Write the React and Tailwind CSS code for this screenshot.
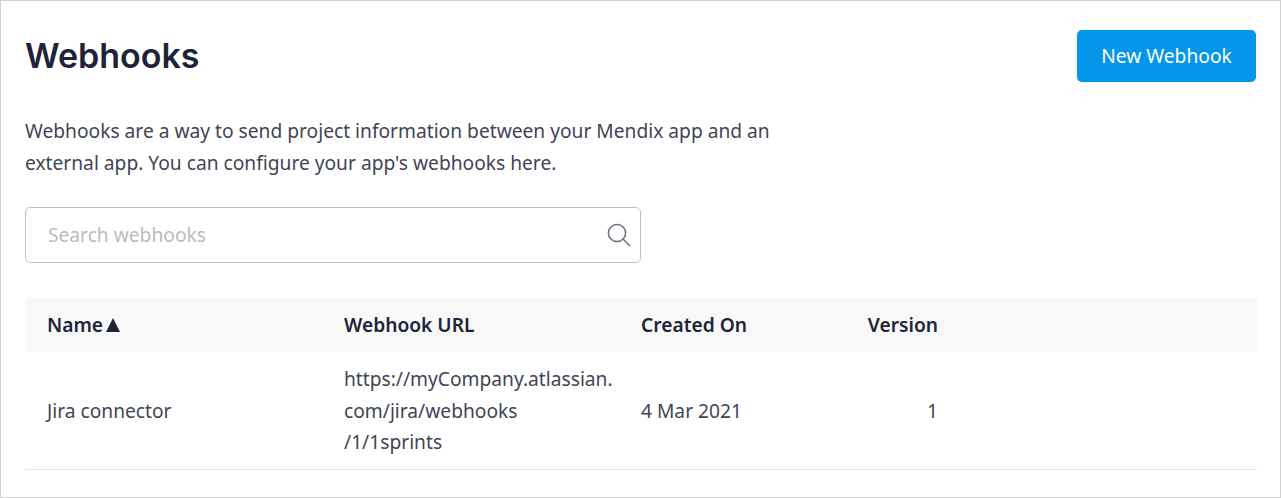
export default function App() {
  return (
    <main className="flex h-[498px] w-[1281px] flex-col overflow-hidden border border-[#d0d0d0] bg-white px-6 pt-[29px] font-['Noto_Sans',sans-serif] text-[19.2px] leading-[31.5px] text-[#3f4554]">
      <header className="flex items-start justify-between">
        <h1 className="pt-1 font-['Inter',sans-serif] text-[34px] leading-[44px] font-semibold text-[#1e2438]">Webhooks</h1>
        <button className="h-[52px] w-[179px] rounded-[5px] bg-[#0595eb] text-white">New Webhook</button>
      </header>
      <p className="mt-[33px] w-[780px]">
        Webhooks are a way to send project information between your Mendix app and an
        <br />
        external app. You can configure your app's webhooks here.
      </p>
      <div className="mt-[29px] flex h-[56px] w-[616px] items-center justify-between rounded-[5px] border border-[#c1c3c8] pr-[9px] pl-[22px]">
        <span className="text-[#b9bcc3]">Search webhooks</span>
        <svg className="size-6" viewBox="0 0 24 24" fill="none" stroke="#6c717e" strokeWidth="1.5">
          <circle cx="10" cy="10" r="8.6" />
          <path d="M16.2 16.2 23 23" />
        </svg>
      </div>
      <table className="mt-[34px] w-[1232px] table-fixed border-collapse text-left">
        <colgroup>
          <col className="w-[297px]" />
          <col className="w-[297px]" />
          <col className="w-[198px]" />
          <col className="w-[143px]" />
          <col />
        </colgroup>
        <thead>
          <tr className="h-[55px] bg-[#f8f8f8] text-[#1e2438]">
            <th className="pl-[22px] font-semibold">
              <span className="flex items-center gap-[3px]">
                Name
                <svg className="h-[14px] w-[14px]" viewBox="0 0 14 14" fill="currentColor"><path d="M7 0 14 14H0Z" /></svg>
              </span>
            </th>
            <th className="pl-[22px] font-semibold">Webhook URL</th>
            <th className="pl-[22px] font-semibold">Created On</th>
            <th className="pr-[22px] text-right font-semibold">Version</th>
            <th />
          </tr>
        </thead>
        <tbody>
          <tr className="h-[117px] border-b border-[#e7e7e9]">
            <td className="pl-[22px]">Jira connector</td>
            <td className="pl-[22px] whitespace-nowrap">https://myCompany.atlassian.<br />com/jira/webhooks<br />/1/1sprints</td>
            <td className="pl-[22px]">4 Mar 2021</td>
            <td className="pr-[22px] text-right">1</td>
            <td />
          </tr>
        </tbody>
      </table>
    </main>
  );
}
